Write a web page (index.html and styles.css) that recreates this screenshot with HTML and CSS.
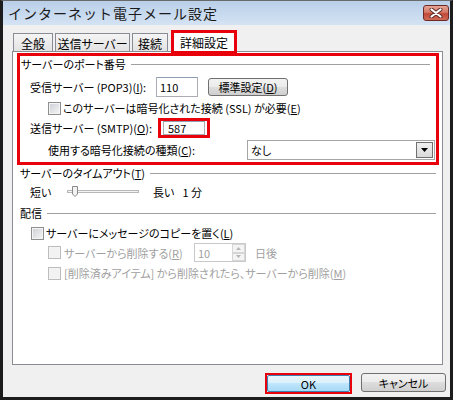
FILE: index.html
```html
<!DOCTYPE html>
<html lang="ja">
<head>
    <meta charset="UTF-8">
    <meta name="viewport" content="width=device-width, initial-scale=1.0">
    <title>インターネット電子メール設定</title>
    <link rel="stylesheet" href="styles.css">
</head>
<body>
    <div class="window">
        <div class="titlebar">
            <span class="title">インターネット電子メール設定</span>
            <div class="close-btn">
                <svg width="14" height="10" viewBox="0 0 14 10">
                    <path d="M2.5 1.5 L11.5 8.5 M11.5 1.5 L2.5 8.5" stroke="#5a2a26" stroke-width="4" stroke-linecap="round"/>
                    <path d="M2.5 1.5 L11.5 8.5 M11.5 1.5 L2.5 8.5" stroke="#ffffff" stroke-width="2.2" stroke-linecap="round"/>
                </svg>
            </div>
        </div>

        <div class="tabs">
            <div class="tab tab-general">全般</div>
            <div class="tab tab-outgoing">送信サーバー</div>
            <div class="tab tab-connection">接続</div>
            <div class="tab tab-active">詳細設定</div>
        </div>

        <div class="panel">
            <div class="highlight">
                <div class="group-title group-ports">サーバーのポート番号</div>

                <div class="row row-pop">
                    <span class="field-label">受信サーバー (POP3)(<u>I</u>):</span>
                    <div class="textbox port-pop">110</div>
                    <div class="btn btn-default">標準設定(<u>D</u>)</div>
                </div>

                <div class="row row-ssl">
                    <span class="checkbox"></span>
                    <span class="check-label">このサーバーは暗号化された接続 (SSL) が必要(<u>E</u>)</span>
                </div>

                <div class="row row-smtp">
                    <span class="field-label smtp-label">送信サーバー (SMTP)(<u>O</u>):</span>
                    <div class="mark">
                        <div class="textbox port-smtp">587</div>
                    </div>
                </div>

                <div class="row row-enc">
                    <span>使用する暗号化接続の種類(<u>C</u>):</span>
                    <div class="combo">
                        <span>なし</span>
                        <span class="combo-btn">
                            <svg width="7" height="4" viewBox="0 0 7 4"><path d="M0 0 H7 L3.5 4 Z" fill="#000"/></svg>
                        </span>
                    </div>
                </div>
            </div>

            <div class="group-title group-timeout">サーバーのタイムアウト(<u>T</u>)</div>

            <div class="row row-timeout">
                <span class="short-label">短い</span>
                <svg class="slider" width="72" height="12" viewBox="0 0 72 12">
                    <rect x="0.5" y="4.5" width="71" height="2" fill="#f4f4f4" stroke="#b7b7b7"/>
                    <path d="M5.5 0.5 H10.5 V8 L8 10.5 L5.5 8 Z" fill="#f2f2f2" stroke="#8a8a8a"/>
                </svg>
                <span class="long-label">長い</span>
                <span class="minutes">1 分</span>
            </div>

            <div class="group-title group-delivery">配信</div>

            <div class="row row-leave">
                <span class="checkbox"></span>
                <span class="check-label">サーバーにメッセージのコピーを置く(<u>L</u>)</span>
            </div>

            <div class="row row-remove disabled">
                <span class="checkbox"></span>
                <span class="check-label remove-label">サーバーから削除する(<u>R</u>)</span>
                <div class="spinner">
                    <span>10</span>
                    <span class="spin-btns">
                        <span class="spin-up">
                            <svg width="5" height="3" viewBox="0 0 5 3"><path d="M0 3 H5 L2.5 0 Z" fill="#b5b5b5"/></svg>
                        </span>
                        <span class="spin-down">
                            <svg width="5" height="3" viewBox="0 0 5 3"><path d="M0 0 H5 L2.5 3 Z" fill="#b5b5b5"/></svg>
                        </span>
                    </span>
                </div>
                <span class="days">日後</span>
            </div>

            <div class="row row-deleted disabled">
                <span class="checkbox"></span>
                <span class="check-label remove-label">[削除済みアイテム] から削除されたら、サーバーから削除(<u>M</u>)</span>
            </div>
        </div>

        <div class="footer">
            <div class="mark mark-ok">
                <div class="btn btn-ok">OK</div>
            </div>
            <div class="btn btn-cancel">キャンセル</div>
        </div>
    </div>
</body>
</html>
```

FILE: styles.css
```css
* {
    box-sizing: border-box;
}
body {
    margin: 0;
    font-family: "Noto Sans CJK JP", "Noto Sans", sans-serif;
    font-size: 11px;
    color: #000;
    font-feature-settings: "palt";
    white-space: nowrap;
}
u {
    text-decoration: underline;
    text-underline-offset: 1px;
}
.window {
    width: 453px;
    height: 400px;
    background: #f0f0f0;
    border: 3px solid #1c1c1c;
    border-top: 1px solid #6a6a6a;
    display: flex;
    flex-direction: column;
}

/* title bar */
.titlebar {
    height: 24px;
    flex-shrink: 0;
    display: flex;
    align-items: flex-start;
    justify-content: space-between;
    background: linear-gradient(#b9cfe8, #d4e3f4);
}
.title {
    margin: 3px 0 0 5px;
    font-size: 14px;
    letter-spacing: 1px;
    font-feature-settings: normal;
    color: #1a1a1a;
    line-height: 18px;
}
.close-btn {
    width: 26px;
    height: 16px;
    margin: 4px 1px 0 0;
    border: 1px solid #6b2a25;
    border-radius: 3px;
    background: linear-gradient(#e8a597 0%, #d47766 45%, #c2493a 55%, #cf6a55 100%);
    display: flex;
    align-items: center;
    justify-content: center;
}

/* tabs */
.tabs {
    height: 26px;
    flex-shrink: 0;
    display: flex;
    align-items: flex-end;
    margin-left: 10px;
    font-size: 12px;
}
.tab {
    height: 18px;
    border: 1px solid #898c95;
    border-bottom: 0;
    background: linear-gradient(#f5f5f5, #e2e2e2);
    display: flex;
    align-items: center;
    justify-content: center;
    padding-top: 1px;
}
.tab-general {
    width: 40px;
    margin-right: 2px;
}
.tab-outgoing {
    width: 75px;
    margin-right: 2px;
}
.tab-connection {
    width: 36px;
    margin-right: 3px;
}
.tab-active {
    width: 66px;
    height: 24px;
    margin-bottom: -3px;
    border: 3px solid #e8000b;
    background: #fff;
    position: relative;
    z-index: 1;
    padding-top: 0;
}

/* tab page */
.panel {
    width: 431px;
    height: 314px;
    margin-left: 9px;
    flex-shrink: 0;
    background: #fff;
    border: 1px solid #898c95;
}
.highlight {
    width: 422px;
    height: 112px;
    margin: 1px 0 0 4px;
    border: 3px solid #e8000b;
}
.group-title {
    height: 16px;
    display: flex;
    align-items: center;
}
.group-title::after {
    content: "";
    flex: 1;
    height: 1px;
    margin: 1px 0 0 5px;
    background: #a0a0a0;
}
.group-ports {
    padding-left: 1px;
    margin-right: 6px;
}
.group-timeout {
    margin: 0 6px 0 7px;
}
.group-delivery {
    margin: 5px 6px 0 7px;
}
.row {
    display: flex;
    align-items: center;
}
.row-pop {
    height: 20px;
    margin-top: 5px;
    padding-left: 10px;
}
.field-label {
    width: 126px;
    flex-shrink: 0;
}
.smtp-label {
    width: 128px;
}
.textbox {
    height: 20px;
    border: 1px solid #abadb3;
    border-top-color: #8f9fb3;
    background: #fff;
    display: flex;
    align-items: center;
}
.port-pop {
    width: 42px;
    padding-left: 3px;
}
.btn {
    display: flex;
    align-items: center;
    justify-content: center;
    border: 1px solid #707070;
    border-radius: 3px;
    background: linear-gradient(#f2f2f2 0%, #ebebeb 50%, #dddddd 50%, #cfcfcf 100%);
}
.btn-default {
    width: 80px;
    height: 18px;
    margin-left: 10px;
}
.row-ssl {
    height: 14px;
    margin-top: 4px;
    padding-left: 28px;
}
.checkbox {
    width: 13px;
    height: 13px;
    flex-shrink: 0;
    border: 1px solid #8e8f8f;
    background: linear-gradient(135deg, #cbcfd5, #f6f6f6);
    box-shadow: inset 0 0 0 1px #f4f4f4;
}
.check-label {
    margin-left: 2px;
}
.row-smtp {
    height: 20px;
    margin-top: 3px;
    padding-left: 10px;
}
.mark {
    border: 3px solid #e8000b;
}
.row-smtp .mark {
    width: 52px;
    height: 20px;
    padding: 0 2px;
}
.port-smtp {
    width: 42px;
    height: 14px;
    padding-left: 4px;
}
.row-enc {
    height: 20px;
    margin-top: 2px;
    padding-left: 28px;
}
.combo {
    width: 188px;
    height: 20px;
    margin: 0 1px 0 auto;
    border: 1px solid #a5a5a5;
    display: flex;
    align-items: center;
    justify-content: space-between;
    padding: 0 0 0 3px;
}
.combo-btn {
    width: 17px;
    height: 16px;
    border: 1px solid #707070;
    background: linear-gradient(#f0f0f0, #d9d9d9);
    display: flex;
    align-items: center;
    justify-content: center;
    margin-right: 1px;
}

/* timeout + delivery */
.row-timeout {
    height: 16px;
    margin-top: 3px;
    padding-left: 17px;
}
.short-label {
    width: 37px;
}
.slider {
    margin-right: 14px;
}
.minutes {
    margin-left: 8px;
}
.row-leave {
    height: 14px;
    margin-top: 5px;
    padding-left: 18px;
}
.disabled {
    color: #a0a0a0;
}
.disabled .checkbox {
    border-color: #bcbcbc;
    background: #f2f2f2;
}
.row-remove {
    height: 19px;
    margin-top: 3px;
    padding-left: 35px;
}
.remove-label {
    margin-left: 3px;
}
.row-remove .remove-label {
    width: 130px;
    flex-shrink: 0;
}
.spinner {
    width: 52px;
    height: 19px;
    border: 1px solid #c9c9c9;
    display: flex;
    align-items: center;
    justify-content: space-between;
    padding-left: 3px;
}
.spin-btns {
    width: 13px;
    height: 17px;
    display: flex;
    flex-direction: column;
}
.spin-up, .spin-down {
    flex: 1;
    border: 1px solid #d6d6d6;
    background: #f4f4f4;
    display: flex;
    align-items: center;
    justify-content: center;
}
.days {
    margin-left: 9px;
}
.row-deleted {
    height: 14px;
    margin-top: 4px;
    padding-left: 35px;
}

/* dialog buttons */
.footer {
    display: flex;
    justify-content: flex-end;
    align-items: flex-start;
    gap: 9px;
    margin-top: 8px;
    padding-right: 4px;
}
.mark-ok {
    width: 87px;
    height: 21px;
    border-width: 2px;
}
.btn-ok {
    width: 100%;
    height: 100%;
    border-color: #3c7fb1;
    border-radius: 2px;
    background: linear-gradient(#eaf6fd 0%, #d9f0fc 50%, #bee6fd 50%, #a7d9f5 100%);
}
.btn-cancel {
    width: 85px;
    height: 19px;
}
```
